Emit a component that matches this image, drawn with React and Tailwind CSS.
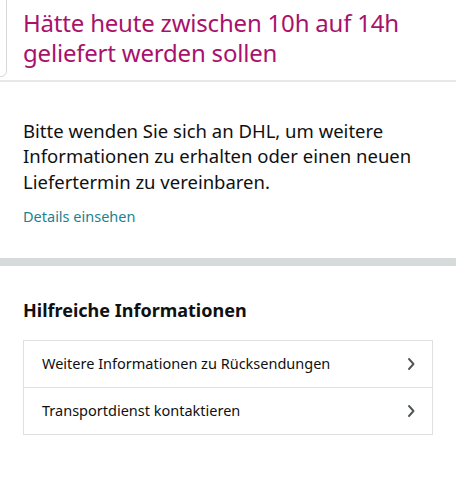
import React from "react";

const Chevron = () => (
  <svg width="9" height="14" viewBox="0 0 9 14" fill="none" className="shrink-0">
    <path d="M2 2 L6.5 7 L2 12" stroke="#4f5454" strokeWidth="1.9" strokeLinecap="round" strokeLinejoin="round" />
  </svg>
);

export default function App() {
  return (
    <div className="w-[456px] h-[480px] bg-white overflow-hidden relative" style={{ fontFamily: '"Noto Sans", "Open Sans", sans-serif' }}>
      <div className="absolute left-[-20px] top-[-10px] w-[27px] h-[87px] border border-[#d5d9d9] rounded-[6px]" />
      <div className="pl-[23px] pr-4 pt-[8px] h-[80px]">
        <div className="text-[24px] leading-[30px] text-[#a8126c] tracking-[-0.2px]">
          Hätte heute zwischen 10h auf 14h
          <br />
          geliefert werden sollen
        </div>
      </div>
      <div className="h-[2px] bg-[#e7e9e9]" />
      <div className="px-[23px] pt-[36px]">
        <p className="text-[18.5px] leading-[25.4px] text-[#0f1111]">
          Bitte wenden Sie sich an DHL, um weitere Informationen zu erhalten oder einen neuen Liefertermin zu vereinbaren.
        </p>
        <p className="mt-[12px] text-[14.5px] leading-[20px] text-[#1a8390]">Details einsehen</p>
      </div>
      <div className="mt-[32px] h-[8px] bg-[#d5dbdb]" />
      <div className="px-[23px] pt-[31px]">
        <h2 className="text-[18px] leading-[26px] font-bold text-[#0f1111]">Hilfreiche Informationen</h2>
        <div className="mt-[17px] border border-[#dfe1e1]">
          <div className="h-[47px] flex items-center justify-between pl-[18px] pr-[16px] border-b border-[#dfe1e1]">
            <span className="text-[14.5px] text-[#0f1111]">Weitere Informationen zu Rücksendungen</span>
            <Chevron />
          </div>
          <div className="h-[46px] flex items-center justify-between pl-[18px] pr-[16px]">
            <span className="text-[14.5px] text-[#0f1111]">Transportdienst kontaktieren</span>
            <Chevron />
          </div>
        </div>
      </div>
    </div>
  );
}
